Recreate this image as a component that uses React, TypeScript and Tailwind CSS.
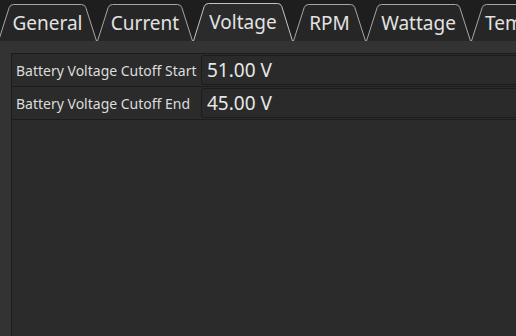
import React from "react";

type TabDef = { label: string; left: number; right: number; active?: boolean };

const tabs: TabDef[] = [
  { label: "General", left: -2, right: 97 },
  { label: "Current", left: 97, right: 193 },
  { label: "Voltage", left: 193, right: 293, active: true },
  { label: "RPM", left: 293, right: 366 },
  { label: "Wattage", left: 366, right: 471 },
  { label: "Temperature", left: 471, right: 614 },
];

function Tab({ t }: { t: TabDef }) {
  const w = t.right - t.left;
  const top = t.active ? 3.5 : 4.5;
  const b = 41;
  const s = 12;
  const d = `M0.5,${b} L${s - 0.8},${top + 3} Q${s + 0.3},${top} ${s + 3.5},${top} L${w - s - 3.5},${top} Q${w - s - 0.3},${top} ${w - s + 0.8},${top + 3} L${w - 0.5},${b}`;
  return (
    <div
      className={`relative flex-none h-[41px] flex justify-center ${t.active ? "pt-[9px]" : "pt-[10px]"}`}
      style={{ width: w }}
    >
      <svg className="absolute inset-0" width={w} height={41} viewBox={`0 0 ${w} 41`}>
        <path d={d} fill={t.active ? "#2b2b2b" : "#262626"} stroke={t.active ? "#c4c4c4" : "#a6a6a6"} strokeWidth={1} />
      </svg>
      <span className="relative text-[19px] leading-[26px] text-[#e2e2e2] whitespace-nowrap">{t.label}</span>
    </div>
  );
}

function Row({ label, value }: { label: string; value: string }) {
  return (
    <div className="flex h-[33px] border-b border-[#1c1c1c]">
      <div className="w-[189px] flex-none flex items-center pl-[4px] text-[14px] text-[#dcdcdc] whitespace-nowrap">
        {label}
      </div>
      <div className="flex-1 py-[1px] pr-[1px]">
        <div className="h-full rounded-[3px] border border-[#1c1c1c] bg-[#2a2a2a] flex items-center pl-[5px] text-[19px] text-[#e6e6e6]">
          {value}
        </div>
      </div>
    </div>
  );
}

export default function App() {
  return (
    <div
      className="w-[516px] h-[336px] overflow-hidden bg-[#1e1e1e] flex flex-col"
      style={{ fontFamily: '"Noto Sans", "Open Sans", sans-serif' }}
    >
      <div className="h-[41px] flex flex-none ml-[-2px]">
        {tabs.map((t) => (
          <Tab key={t.label} t={t} />
        ))}
      </div>
      <div className="flex-1 bg-[#333333] pt-[12px] pl-[11px]">
        <div className="w-[520px] h-full bg-[#2b2b2b] border-l border-t border-[#1c1c1c]">
          <Row label="Battery Voltage Cutoff Start" value="51.00 V" />
          <Row label="Battery Voltage Cutoff End" value="45.00 V" />
        </div>
      </div>
    </div>
  );
}
